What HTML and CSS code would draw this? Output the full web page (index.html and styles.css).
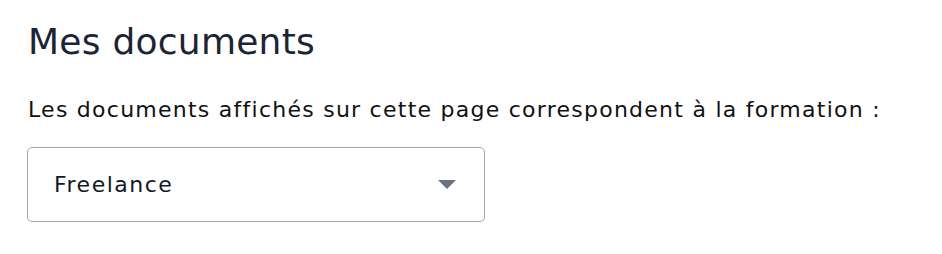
FILE: index.html
```html
<!DOCTYPE html>
<html lang="fr">
<head>
<meta charset="utf-8">
<link rel="stylesheet" href="styles.css">
</head>
<body>
<main class="page">
  <h1 class="title">Mes documents</h1>
  <p class="intro">Les documents affichés sur cette page correspondent à la formation :</p>
  <div class="select">
    <span class="select-value">Freelance</span>
    <svg class="caret" width="18" height="9" viewBox="0 0 18 9"><path d="M0 0H18L9 9Z" fill="#6b7280"/></svg>
  </div>
</main>
</body>
</html>
```

FILE: styles.css
```css
html, body { margin: 0; padding: 0; background: #fff; }
body { font-family: "DejaVu Sans", sans-serif; }
.page { padding: 20px 0 0 28px; display: flex; flex-direction: column; align-items: flex-start; }
.title { margin: 0; font-size: 36px; font-weight: 400; line-height: 44px; letter-spacing: 0.25px; color: #1b2535; }
.intro { margin: 31px 0 0 0; font-size: 22px; line-height: 30px; letter-spacing: 1.25px; color: #111; }
.select {
  margin: 22px 0 0 -1px;
  box-sizing: border-box;
  width: 458px; height: 75px;
  border: 1px solid #a3a6ad; border-radius: 5px;
  display: flex; align-items: center; justify-content: space-between;
  padding: 0 28px 0 26px;
}
.select-value { font-size: 22px; line-height: 30px; letter-spacing: 1.5px; color: #111827; }
.caret { display: block; }
```
